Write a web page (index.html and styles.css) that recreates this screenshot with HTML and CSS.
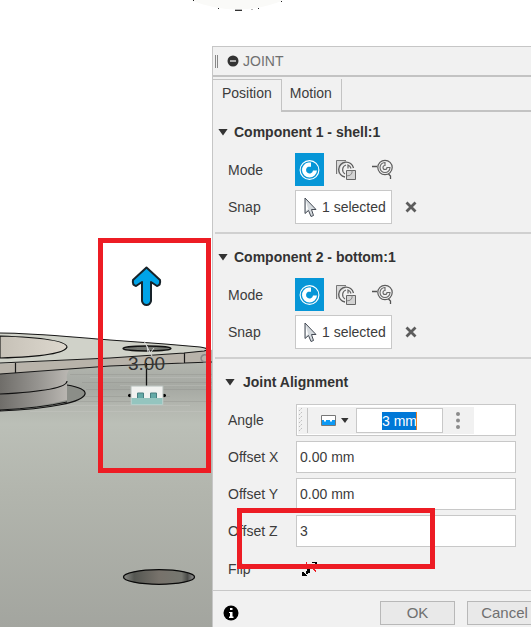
FILE: index.html
```html
<!DOCTYPE html>
<html lang="en">
<head>
<meta charset="utf-8">
<title>Joint</title>
<link rel="stylesheet" href="styles.css">
</head>
<body>
<svg class="sprites" aria-hidden="true">
  <symbol id="simple" viewBox="0 0 29 33">
    <circle cx="14.500" cy="17" r="9.400" fill="none" stroke="#fff" stroke-width="1.100"/>
    <path d="M13.500 9.500A7.500 7.500 0 1 0 22 17.500H18A3.500 3.500 0 1 1 13 13.800H16V9.500Z" fill="#fff"/>
  </symbol>
  <symbol id="between" viewBox="0 0 22 22">
    <path d="M1 1H11V4L6 7 4 15H1Z" fill="#d9d9d9"/>
    <path d="M1.500 15V1.500H11" fill="none" stroke="#777"/>
    <path d="M18.500 9A7.500 7.500 0 1 0 10 18" fill="none" stroke="#5c5c5c" stroke-width="1.300"/>
    <path d="M16 9.500A5 5 0 0 0 13 6V9.500M11 6A5 5 0 0 0 10 15" fill="none" stroke="#666" stroke-width="1.200"/>
    <path d="M11.500 11.500H20.500V20.500H11.500Z" fill="#d3d3d3" stroke="#666"/>
    <path d="M17 11.500V14Q16 17 11.500 17" fill="none" stroke="#888"/>
  </symbol>
  <symbol id="origins" viewBox="0 0 22 22">
    <path d="M0 7.500H5M16.500 15L18.500 17V20" fill="none" stroke="#555" stroke-width="1.300"/>
    <circle cx="13" cy="8.500" r="7.200" fill="none" stroke="#5c5c5c" stroke-width="1.200"/>
    <path d="M13 3.500A5 5 0 1 0 18 8.500H15A2 2 0 1 1 13 6.500Z" fill="#f1f1f1" stroke="#666" stroke-width="1.100"/>
  </symbol>
  <symbol id="cursor" viewBox="0 0 13 21">
    <path d="M1 1V16.500L4.500 13.500 7 19.500 9.500 18.500 7.500 12.500H12Z" fill="#d5dade" stroke="#454b55"/>
    <path d="M2 4V14L4 12Z" fill="#fff"/>
  </symbol>
  <symbol id="cross" viewBox="0 0 12 12">
    <path d="M1.500 1.500L10.500 10.500M10.500 1.500L1.500 10.500" fill="none" stroke="#5c5c5c" stroke-width="2.800"/>
  </symbol>
</svg>
<main class="app">
  <svg class="scene" width="531" height="627" viewBox="0 0 531 627" role="img" aria-label="Model view">
    <defs>
      <linearGradient id="body" x1="0" y1="360" x2="0" y2="627" gradientUnits="userSpaceOnUse">
        <stop offset="0" stop-color="#b4b7b0"/><stop offset=".1" stop-color="#a5a8a2"/><stop offset=".17" stop-color="#b3b6af"/><stop offset=".24" stop-color="#bbbfb7"/><stop offset=".5" stop-color="#b2b5ad"/><stop offset="1" stop-color="#a3a59f"/>
      </linearGradient>
      <linearGradient id="tube"><stop offset="0" stop-color="#6f6d69"/><stop offset=".55" stop-color="#969490"/><stop offset="1" stop-color="#bbb8b3"/></linearGradient>
      <linearGradient id="hole"><stop offset="0" stop-color="#8d8e89"/><stop offset=".15" stop-color="#555752"/><stop offset=".5" stop-color="#77726b"/><stop offset=".82" stop-color="#767770"/><stop offset=".9" stop-color="#4b4c49"/><stop offset="1" stop-color="#999"/></linearGradient>
      <linearGradient id="bore"><stop offset="0" stop-color="#c6c1b7"/><stop offset="1" stop-color="#ddd8ce"/></linearGradient>
    </defs>
    <path d="M190 0Q238 19 284 0Z" fill="#fafaf8"/>
    <path d="M235 10.500H242" stroke="#333"/><path d="M235 9.500H242M251 9.500H253" stroke="#bbb"/>
    <path d="M193 0h1v1h-1zM218 8h1v1h-1zM258 8h1v1h-1zM281 1h1v1h-1z" fill="#222"/>
    <path d="M0 366L212 357V627H0Z" fill="url(#body)"/>
    <g fill="none" stroke="#7e817c" opacity=".25">
      <path d="M70 374.500H212M82 382.500H212M86 389.500H212M80 396.500H170M66 401.500H212"/>
    </g>
    <g fill="none" stroke="#d2d4cf" opacity=".25"><path d="M90 377.500H212M120 385.500H212M60 405.500H190M30 411.500H212"/></g>
    <path d="M67 385C79 387 86 390 85 394C83 402 50 409 0 411V385Z" fill="#8b8e88" stroke="#111" stroke-width="1.200"/>
    <path d="M0 373L69 370Q66 374 67 380V400Q40 407 0 410Z" fill="url(#tube)"/>
    <path d="M67 381C67 388 40 392 0 394" fill="none" stroke="#111" stroke-width="1.200"/>
    <path d="M0 410Q40 408 67 402" fill="none" stroke="#111"/>
    <path d="M0 333C35 333 70 337 110 340L165 344 200 347Q210 349 212 350V362L184 363 110 366 0 374Z" fill="#b8b3aa"/>
    <path d="M0 333C35 333 70 337 110 340L165 344 200 347Q212 349 204 351L184 353 110 358 0 364Z" fill="#d0d2c9"/>
    <path d="M0 336C32 337 66 340 67 347C65 354 35 357 0 358Z" fill="url(#bore)" stroke="#111" stroke-width="1.100"/>
    <path d="M0 333C35 333 70 337 110 340L165 344 200 347Q212 349 204 351L184 353 110 358 0 363M0 374L110 366 184 363 212 362M15.500 363V373M184.500 353V363" fill="none" stroke="#191919" stroke-width="1.200"/>
    <ellipse cx="147" cy="348.500" rx="24" ry="2.500" fill="#777a74" stroke="#111" stroke-width="1.300"/>
    <path d="M144 341L152 356M147 346L148 352M151 352L154 348" fill="none" stroke="#ddd"/>
    <path d="M206 355Q202 354 201 358Q201 362 206 362" fill="none" stroke="#888" stroke-width="1.500"/>
    <path d="M146.500 363V387" stroke="#111" stroke-width="1.300"/>
    <path d="M128 395.500H166" stroke="#111" stroke-width="1.500"/><circle cx="130" cy="395.500" r="1.800"/><circle cx="164" cy="395.500" r="1.800"/>
    <path d="M131 386H163V405H131Z" fill="#f1f2f0" stroke="#b4bdb9"/>
    <path d="M131.500 398H162.500V404.500H131.500Z" fill="#94c5bf"/><path d="M137.500 398V393H143.500V398M150.500 398V393H156.500V398" fill="#64aaa7" stroke="#477f80"/>
    <text class="dimension" x="128" y="370">3.00</text>
    <path d="M146.500 267.500L160 280Q161 285 157 286L151 282V301Q150 305 146.500 305Q143 305 142 301V282L136 286Q132 285 133 280Z" fill="#00a4e8" stroke="#17232a" stroke-width="2" stroke-linejoin="round"/>
    <ellipse cx="159" cy="577" rx="35.500" ry="7.300" fill="url(#hole)" stroke="#090909" stroke-width="1.300"/>
  </svg>

  <section class="panel" aria-label="Joint">
    <header class="titlebar">
      <span class="grip"></span>
      <svg width="12" height="12" viewBox="0 0 12 12" aria-hidden="true"><circle cx="6" cy="6" r="5.500" fill="#333"/><path d="M3 6H9" stroke="#eee" stroke-width="1.300"/></svg>
      <span>JOINT</span>
    </header>
    <nav class="tabs"><button class="tab active" type="button">Position</button><button class="tab" type="button">Motion</button></nav>

    <section class="group">
      <h2 class="heading"><span class="caret"></span>Component 1 - shell:1</h2>
      <div class="row mode"><span class="label">Mode</span>
        <button class="tool chosen" type="button" aria-label="Simple"><svg width="29" height="33"><use href="#simple"/></svg></button>
        <button class="tool" type="button" aria-label="Between two faces"><svg width="22" height="22"><use href="#between"/></svg></button>
        <button class="tool" type="button" aria-label="Two edge intersection"><svg width="22" height="22"><use href="#origins"/></svg></button>
      </div>
      <div class="row snap"><span class="label">Snap</span>
        <button class="select" type="button"><svg width="13" height="21" aria-hidden="true"><use href="#cursor"/></svg>1 selected</button>
        <button class="clear" type="button" aria-label="Clear"><svg width="12" height="12"><use href="#cross"/></svg></button>
      </div>
    </section>

    <section class="group">
      <h2 class="heading"><span class="caret"></span>Component 2 - bottom:1</h2>
      <div class="row mode"><span class="label">Mode</span>
        <button class="tool chosen" type="button" aria-label="Simple"><svg width="29" height="33"><use href="#simple"/></svg></button>
        <button class="tool" type="button" aria-label="Between two faces"><svg width="22" height="22"><use href="#between"/></svg></button>
        <button class="tool" type="button" aria-label="Two edge intersection"><svg width="22" height="22"><use href="#origins"/></svg></button>
      </div>
      <div class="row snap"><span class="label">Snap</span>
        <button class="select" type="button"><svg width="13" height="21" aria-hidden="true"><use href="#cursor"/></svg>1 selected</button>
        <button class="clear" type="button" aria-label="Clear"><svg width="12" height="12"><use href="#cross"/></svg></button>
      </div>
    </section>

    <section class="alignment">
      <h2 class="heading indented"><span class="caret"></span>Joint Alignment</h2>
      <div class="fields">
        <div class="row"><label class="label" for="angle">Angle</label>
          <div class="field angle">
            <div class="floating">
              <svg width="10" height="27" viewBox="0 0 10 27" aria-hidden="true"><path d="M1 4L4 1M1 8L4 5M1 12L4 9M1 16L4 13M1 20L4 17M1 24L4 21" stroke="#bbb" stroke-dasharray="2 1"/><path d="M9.500 1V26" stroke="#c4c4c4"/></svg>
              <button class="unit" type="button" aria-label="Measure type"><svg width="28" height="12" viewBox="0 0 28 12"><path d="M.5 .5H14.500V10.500H.5Z" fill="#fff" stroke="#777"/><path d="M1 5H3V6.500H5V5H9V6.500H11V5H14V10H1Z" fill="#0c99f5"/><path d="M20 3H27.500L24 8Z" fill="#333"/></svg></button>
              <span class="entry"><input class="value" id="angle" value="3 mm"></span>
              <button class="more" type="button" aria-label="More"><svg width="4" height="17" viewBox="0 0 4 17"><g fill="#8b8b8b"><circle cx="2" cy="2" r="2"/><circle cx="2" cy="8.500" r="2"/><circle cx="2" cy="15" r="2"/></g></svg></button>
            </div>
          </div>
        </div>
        <div class="row"><label class="label" for="x">Offset X</label><input class="field" id="x" value="0.00 mm"></div>
        <div class="row"><label class="label" for="y">Offset Y</label><input class="field" id="y" value="0.00 mm"></div>
        <div class="row"><label class="label" for="z">Offset Z</label><input class="field" id="z" value="3"></div>
        <div class="row flip"><span class="label">Flip</span>
          <button class="flipper" type="button" aria-label="Flip"><svg width="16" height="16" viewBox="0 0 16 16" shape-rendering="crispEdges"><path d="M10 1H15V3H13V2H10ZM5 8H7V7H8V6H9V8H8V12H6V13H4V10H5ZM0 11H2V12H3V13H4V14H5V15H0Z"/><path d="M4 1H5V5H4ZM10 7H12V8H13V9H14V11H13V10H12V9H11V8H10Z" fill="#ec1c24"/></svg></button>
        </div>
      </div>
    </section>
    <footer class="footer">
      <button class="info" type="button" aria-label="Information"><svg width="16" height="16" viewBox="0 0 16 16"><circle cx="8" cy="8" r="7.500"/><path d="M7 3H9.500V5H7ZM6 7H9.500V11.500H10.500V13H6V11.500H7V8H6Z" fill="#fff"/></svg></button>
      <button class="action" type="button">OK</button>
      <button class="action" type="button">Cancel</button>
    </footer>
  </section>
  <div class="mark mark-model"></div>
  <div class="mark mark-offset"></div>
</main>
</body>
</html>
```

FILE: styles.css
```css
* { box-sizing: border-box; }
body { margin: 0; background: #fff; color: #3c3c3c; font: 14px/18px "Liberation Sans", Arial, sans-serif; overflow: hidden; }
button, input { font: inherit; color: inherit; margin: 0; padding: 0; border: 0; background: none; border-radius: 0; }
svg { display: block; flex: none; }
.sprites { position: absolute; width: 0; height: 0; }
.app { position: relative; display: grid; grid-template-columns: 212px minmax(0, 1fr); min-height: 100vh; }
.scene { position: absolute; top: 0; left: 0; }
.dimension { font: 19px "Liberation Sans", Arial, sans-serif; fill: #333; }
.panel { position: relative; grid-column: 2; margin-top: 46px; display: flex; flex-direction: column; background: #f1f1f1; border: solid #c6c6c6; border-width: 1px 0 0 1px; overflow: hidden; }
.titlebar { display: flex; align-items: center; height: 30px; padding-left: 2px; border-bottom: 2px solid #c3c3c3; color: #707070; }
.titlebar svg { margin: 0 4px 0 9px; }
.grip { width: 3px; height: 13px; border: solid #888; border-width: 0 1px; }
.tabs { display: flex; height: 35px; padding-top: 2px; border-bottom: 2px solid #c3c3c3; }
.tab { padding: 0 9px 3px 8px; border-right: 1px solid #c3c3c3; }
.tab.active { margin-bottom: -2px; padding: 0 9px 6px; border-top: 1px solid #c3c3c3; background: #f1f1f1; }
.group { height: 125px; padding: 14px 0 0 15px; border-bottom: 2px solid #d0d0d0; margin-left: 2px; }
.tabs + .group { height: 122px; padding-top: 11px; }
.group .row { margin-left: -2px; }
.heading { display: flex; align-items: center; gap: 6px; height: 18px; margin: 0 0 0 -12px; font-size: 14px; font-weight: 700; color: #333; }
.caret { width: 10px; height: 7px; background: #333; clip-path: polygon(0 0, 100% 0, 50% 100%); }
.row { display: flex; align-items: center; }
.label { flex: none; width: 67px; }
.mode { height: 33px; margin-top: 12px; }
.tool { padding: 0; margin-right: 15px; }
.tool.chosen { background: #0696d7; margin-right: 11px; }
.snap { height: 34px; margin-top: 4px; }
.select { display: flex; align-items: center; gap: 5px; height: 34px; padding: 0 5px 0 8px; border: 1px solid #c8c8c8; background: #fff; }
.clear { margin-left: 13px; }
.alignment { flex: 1; padding: 14px 15px 0; }
.heading.indented { margin-left: -3px; gap: 8px; }
.fields { display: flex; flex-direction: column; gap: 5px; margin-top: 13px; }
.field { flex: 1; min-width: 0; height: 32px; padding: 0 3px; border: 1px solid #c8c8c8; background: #fff; }
.fields .label { width: 68px; }
.angle { padding: 2px 0 1px 1px; }
.floating { display: flex; align-items: center; width: 176px; height: 27px; background: #f1f1f1; }
.unit { margin-left: 13px; }
.entry { display: flex; align-items: center; justify-content: center; width: 87px; height: 25px; margin-left: 7px; border: 1px solid #c8c8c8; background: #fff; }
.value { width: 35px; height: 18px; background: #0078d7; color: #fff; border-right: 1px solid #e9822b; }
.more { margin-left: 13px; }
.flip { height: 33px; }
.flipper { margin-left: 6px; }
.footer { display: flex; align-items: center; height: 37px; padding: 8px 0 0 10px; border-top: 1px solid #c8c8c8; margin-right: -11px; }
.footer .info { margin-right: auto; }
.action { width: 75px; height: 24px; margin-left: 12px; border: 1px solid #b8b8b8; background: #e9e9e9; color: #707070; font-size: 15px; }
.mark { position: absolute; border: 5px solid #ed1c24; }
.mark-model { left: 98px; top: 238px; width: 113px; height: 235px; }
.mark-offset { left: 237px; top: 508px; width: 198px; height: 61px; }
```
